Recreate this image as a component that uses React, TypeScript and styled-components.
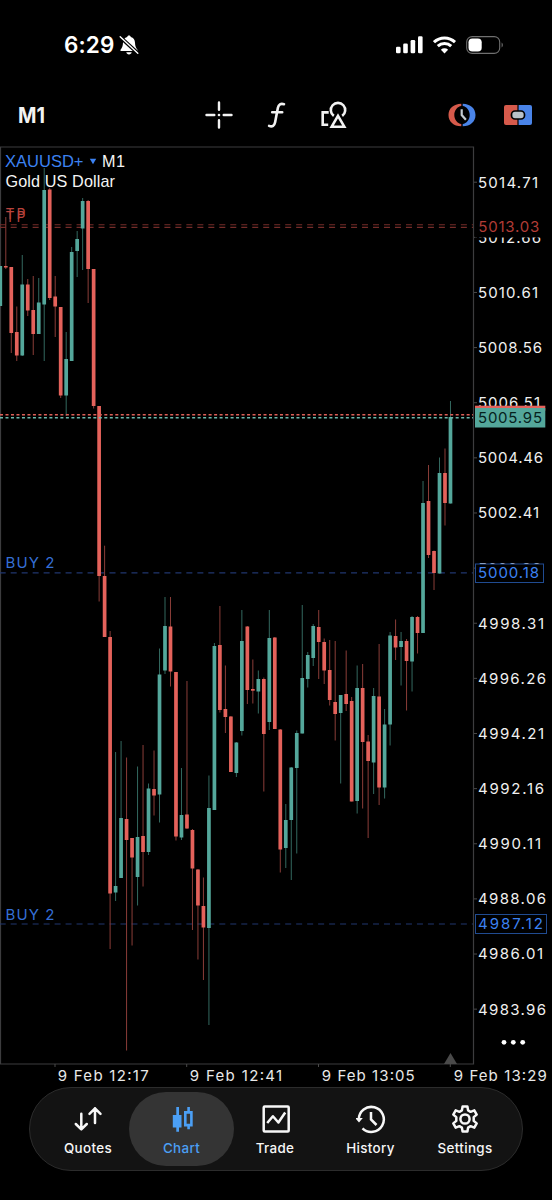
import React from 'react';
import styled, { createGlobalStyle } from 'styled-components';

const GlobalStyle = createGlobalStyle`
  * { box-sizing: border-box; }
  body { margin: 0; background: #000; }
`;

const Screen = styled.div`
  width: 552px;
  height: 1200px;
  display: flex;
  flex-direction: column;
  background: #000;
  color: #fff;
  font-family: Inter, 'Liberation Sans', sans-serif;
  overflow: hidden;
`;

const StatusBar = styled.header`
  height: 90px;
  padding: 0 48px 0 64px;
  display: flex;
  align-items: center;
  justify-content: space-between;
`;

const StatusGroup = styled.div<{ $gap: number }>`
  display: flex;
  align-items: center;
  gap: ${(p) => p.$gap}px;
`;

const Clock = styled.span`
  font-size: 22.5px;
  font-weight: 600;
  line-height: 26px;
  letter-spacing: 0.1px;
`;

const Toolbar = styled.div`
  height: 56px;
  padding: 0 20px 6px 18px;
  display: grid;
  grid-template-columns: 1fr auto 1fr;
  align-items: center;
`;

const ToolGroup = styled.div<{ $gap: number; $end?: boolean; $inset?: number }>`
  display: flex;
  align-items: center;
  gap: ${(p) => p.$gap}px;
  padding-left: ${(p) => p.$inset ?? 0}px;
  justify-content: ${(p) => (p.$end ? 'flex-end' : 'flex-start')};
`;

const IconButton = styled.button`
  display: flex;
  padding: 0;
  border: 0;
  background: none;
  color: #f2f2f2;
`;

const Timeframe = styled(IconButton)`
  font: 650 22px/26px Inter, sans-serif;
  transform: scaleX(0.9);
  transform-origin: left;
`;

const ChartArea = styled.main`
  height: 941px;
  display: flex;
`;

const TabBar = styled.nav`
  width: 494px;
  height: 84px;
  margin: 0 0 0 29px;
  padding: 4px 5px 4px 17px;
  display: flex;
  border: 1px solid #2c2c2c;
  border-radius: 42px;
  background: #131313;
`;

const Tab = styled.button<{ $active?: boolean; $width: number }>`
  width: ${(p) => p.$width}px;
  height: 74px;
  padding: 12px 0 0;
  display: flex;
  flex-direction: column;
  align-items: center;
  gap: 5px;
  border: 0;
  border-radius: 37px;
  background: ${(p) => (p.$active ? '#343434' : 'transparent')};
  color: ${(p) => (p.$active ? '#4b9ff5' : '#f7f7f7')};
  font: 500 13.4px/18px Inter, sans-serif;
  letter-spacing: 0.35px;
`;

/* direction, high, body top, body bottom, low */
type Candle = ['u' | 'd', number, number, number, number];

const candles: Candle[] = [
  ['u', 266, 266, 306, 306], ['d', 217, 266, 267.5, 269], ['d', 267, 267, 333, 353],
  ['d', 306.5, 332, 355.5, 361], ['u', 255, 284.5, 355.5, 356], ['d', 279, 284.5, 310.5, 316],
  ['d', 276, 310, 334, 355], ['u', 278, 302.5, 334, 334], ['u', 168, 190, 304.5, 361],
  ['d', 188, 189.5, 298, 300], ['d', 276, 296.5, 306.5, 337], ['d', 307, 307, 395.5, 398],
  ['u', 332, 359, 395.5, 416], ['u', 247, 252, 361, 361], ['u', 231, 239, 251, 277],
  ['u', 198, 201, 228.5, 270], ['d', 200, 201, 269, 303], ['d', 269, 269, 406, 408.5],
  ['d', 406, 406, 576, 601.5], ['d', 545.7, 576, 637, 637], ['d', 631, 637, 893.5, 949],
  ['u', 752, 886, 892.5, 901], ['u', 741, 818, 878, 878], ['d', 757.5, 819, 840, 1050.5],
  ['d', 838, 838, 857.5, 945.5], ['u', 766.5, 837, 877, 905.5], ['d', 745, 836, 852, 886.5],
  ['u', 783.5, 788.5, 852, 855], ['d', 750.5, 789, 795.5, 815.5], ['u', 648.5, 674.5, 794.5, 822.5],
  ['u', 597, 626, 670.5, 674], ['d', 597, 626.5, 671.5, 686.5], ['d', 672, 672, 836.5, 840.5],
  ['u', 768, 815, 837.5, 840], ['d', 681, 814.5, 828.5, 829], ['d', 829, 830, 868.5, 930],
  ['d', 869, 869.5, 905.5, 959.5], ['d', 877.5, 906, 927.5, 980], ['u', 775.5, 808, 928, 1025],
  ['u', 643, 646, 810, 810], ['d', 606, 645, 710, 712.5], ['d', 665.5, 709, 717, 733],
  ['d', 716, 716.5, 772, 772], ['u', 742, 742.5, 773, 777], ['u', 610, 641, 731, 735.5],
  ['d', 626, 626.5, 690, 704], ['d', 659.5, 689, 690.7, 703.5], ['u', 670.5, 679, 691.5, 713.5],
  ['d', 677.5, 679, 734, 791.5], ['u', 610, 638, 722, 730], ['d', 637, 637.5, 729, 729],
  ['d', 729, 729.5, 849.5, 872.5], ['u', 804, 820, 848, 868], ['u', 767, 767.5, 820, 880],
  ['u', 730.5, 733, 768, 853.5], ['u', 605, 678, 733.5, 733.5], ['u', 652, 655, 679, 687.5],
  ['u', 624, 626, 658, 666], ['d', 610, 627, 642, 679], ['d', 638.5, 642, 670.5, 684],
  ['d', 640, 670, 700, 705.5], ['d', 641, 702, 714, 740.5], ['u', 695, 695, 713, 783.5],
  ['d', 650.5, 694, 704, 711], ['d', 697, 701, 801.5, 801.5], ['u', 665.5, 688, 801, 813.5],
  ['d', 664, 688, 742, 808.5], ['d', 735, 741.5, 761, 838], ['u', 688, 696, 762.5, 794],
  ['d', 644, 696.5, 787.5, 805], ['u', 709, 724.5, 787.5, 798.5], ['u', 632, 635.5, 724.5, 745.5],
  ['d', 619.5, 636, 647.5, 660], ['u', 632, 641, 647, 685.5], ['d', 639, 641, 661, 710.5],
  ['u', 616, 617, 661.5, 691.5], ['d', 616, 617, 633, 653.5], ['u', 481, 503, 633, 633],
  ['d', 465, 501, 555, 558], ['d', 550.5, 551, 573, 590], ['u', 457.5, 473, 573.5, 573.5],
  ['d', 448.5, 473, 503, 525.5], ['u', 401, 417, 503.5, 503.5],
];

/* label, drawn width */
const prices: [string, number][] = [
  ['5014.71', 60], ['5012.66', 63], ['5010.61', 60], ['5008.56', 64], ['5006.51', 62],
  ['5004.46', 65], ['5002.41', 61], ['5000.36', 63], ['4998.31', 66], ['4996.26', 68],
  ['4994.21', 66], ['4992.16', 66], ['4990.11', 63], ['4988.06', 68], ['4986.01', 65],
  ['4983.96', 68],
];

const times: [string, number, number][] = [
  ['9 Feb 12:17', 58, 91], ['9 Feb 12:41', 190, 92.5], ['9 Feb 13:05', 322, 93], ['9 Feb 13:29', 454, 93],
];

const Label = styled.text<{ $size?: number }>`
  font-family: Inter, sans-serif;
  font-size: ${(p) => p.$size ?? 15}px;
`;

const Caption = styled.text`
  font-family: 'Liberation Sans', Arial, sans-serif;
  font-size: 16.2px;
`;

function PriceChart() {
  return (
    <svg width="552" height="941" viewBox="0 146 552 941">
      <path d="M0.5 1064V147H473.5V1064H0" fill="none" stroke="#3c3c3e" strokeWidth="1.2" />
      <Caption x="5" y="166.5" fill="#3c82f2" textLength="78.5" lengthAdjust="spacingAndGlyphs">XAUUSD+</Caption>
      <path d="M89.8 158.8h6.4l-3.2 5.4z" fill="#3c82f2" />
      <Caption x="102" y="166.5" fill="#f4f4f4" textLength="23">M1</Caption>
      <Caption x="5.5" y="186.7" fill="#f4f4f4" textLength="109.5">Gold US Dollar</Caption>

      <g stroke="#742c29" strokeWidth="1.1" strokeDasharray="6 4.98">
        <path d="M-0.3 224.8H473M-0.3 227.4H473" />
      </g>
      <g stroke="#20366f" strokeWidth="1.2" strokeDasharray="6 4.98">
        <path d="M-0.3 572.8H473M-0.3 924H473" />
      </g>

      {candles.map(([dir, high, top, bottom, low], i) => {
        const x = 0.3 + i * 5.49;
        const up = dir === 'u';
        return (
          <g key={i}>
            <rect x={x - 0.5} y={high} width="1" height={low - high} fill={up ? '#33685f' : '#8a3d38'} />
            <rect x={x - 1.85} y={top} width="3.7" height={bottom - top} fill={up ? '#54a79b' : '#e4625b'} />
          </g>
        );
      })}

      <path d="M0 414.8H473" stroke="#dc5f57" strokeWidth="1.6" strokeDasharray="3 2.49" />
      <path d="M0 417.7H473" stroke="#6cb9ad" strokeWidth="1.6" strokeDasharray="3 2.49" />

      <g fill="#b8433c">
        <Label x="5.5" y="219" textLength="20" $size={14}>TP</Label>
        <Label x="5.5" y="222" textLength="20" $size={14}>TP</Label>
      </g>
      <Label x="5.5" y="568.4" fill="#356fd6" textLength="49">BUY 2</Label>
      <Label x="5.5" y="919.8" fill="#356fd6" textLength="49">BUY 2</Label>

      {prices.map(([text, width], i) => {
        const y = 182.2 + i * 55.13;
        return (
          <g key={text}>
            <path d={`M474 ${y}h3`} stroke="#4a4a4a" />
            <Label x="478" y={y + 5.4} fill="#f0f0f0" textLength={width}>{text}</Label>
          </g>
        );
      })}

      <rect x="475" y="217" width="72" height="20.5" fill="#000" />
      <Label x="478.3" y="232.4" fill="#b13c36" textLength="61">5013.03</Label>
      <rect x="475" y="405.7" width="70.3" height="5" fill="#e4625b" />
      <rect x="475" y="408" width="70.3" height="19.5" fill="#54a79b" />
      <Label x="478" y="423.2" fill="#06211d" textLength="64">5005.95</Label>
      <rect x="475.5" y="564" width="68" height="18.500" fill="#000" stroke="#204b91" />
      <Label x="478" y="578.3" fill="#3c82f2" textLength="61">5000.18</Label>
      <rect x="475.5" y="914.5" width="71" height="19" fill="#000" stroke="#204b91" />
      <Label x="478" y="929.4" fill="#3c82f2" textLength="65">4987.12</Label>

      <path d="M450.5 1053l6.500 11h-13z" fill="#4a4a4a" />
      <g stroke="#4a4a4a">
        {[55, 186.7, 318.5, 450.3].map((x) => <path key={x} d={`M${x} 1064v3`} />)}
      </g>
      <g fill="#fff">
        <circle cx="504" cy="1042.3" r="2.4" /><circle cx="513.3" cy="1042.3" r="2.4" /><circle cx="522.7" cy="1042.3" r="2.4" />
      </g>
      {times.map(([text, x, width]) => (
        <Label key={text} x={x - 0.3} y="1080.6" fill="#e8e8e8" textLength={width}>{text}</Label>
      ))}
    </svg>
  );
}

const BellOff = () => (
  <svg width="20" height="20" viewBox="0 0 20 20">
    <path d="M10 .6c-1 0-1.7.7-1.8 1.5C5.500 2.900 4.100 5 4 7.800c-.1 3.600-1 5-2.300 6.600-.6.8-.2 1.700.8 1.700h15c1 0 1.400-.9.8-1.700C17 12.800 16.100 11.400 16 7.800c-.1-2.800-1.500-4.900-4.200-5.700C11.700 1.300 11 .6 10 .6z" fill="#fff" />
    <path d="M7.300 17.300h5.400c-.3 1.300-1.300 2.200-2.700 2.200s-2.400-.9-2.700-2.200z" fill="#fff" />
    <path d="M0.700 1.700L19 18.300" stroke="#000" strokeWidth="3.600" />
    <path d="M1.200 1.800L18.800 18.200" stroke="#fff" strokeWidth="1.400" strokeLinecap="round" />
  </svg>
);

const Signal = () => (
  <svg width="28" height="18" viewBox="0 0 28 18" fill="#fff">
    <rect x="0" y="10.700" width="4.600" height="6.600" rx="1.300" />
    <rect x="7.200" y="7.500" width="4.600" height="9.800" rx="1.300" />
    <rect x="14.600" y="4" width="4.600" height="13.300" rx="1.300" />
    <rect x="22" y="0.300" width="4.600" height="17" rx="1.300" />
  </svg>
);

const Wifi = () => (
  <svg width="24" height="18" viewBox="0 0 24 18" fill="none" stroke="#fff" strokeWidth="3">
    <path d="M1 6.200a15.200 15.200 0 0 1 21 0" />
    <path d="M4.800 10.200a9.700 9.700 0 0 1 13.400 0" />
    <path d="M11.500 17.400l-3.600-3.700a5.200 5.200 0 0 1 7.200 0z" fill="#fff" stroke="none" />
  </svg>
);

const Battery = () => (
  <svg width="38" height="18" viewBox="0 0 38 18">
    <rect x="0.700" y="0.600" width="33" height="16.800" rx="5.500" fill="none" stroke="#707070" strokeWidth="1.100" />
    <rect x="2.500" y="2.400" width="13.200" height="13.200" rx="3.800" fill="#fff" />
    <path d="M35.600 6.500c1.600.7 1.600 4.300 0 5z" fill="#707070" />
  </svg>
);

const Crosshair = () => (
  <svg width="28" height="28" viewBox="0 0 28 28" fill="none" stroke="currentColor" strokeWidth="2.400" strokeLinecap="round">
    <path d="M14 1.500v7.300M14 19.200v7.300M1.500 14h7.800M18.700 14h7.800" />
    <circle cx="14" cy="14" r="1.300" fill="currentColor" stroke="none" />
  </svg>
);

const FunctionIcon = () => (
  <svg width="20" height="28" viewBox="0 0 20 28" fill="none" stroke="currentColor" strokeWidth="2.600" strokeLinecap="round">
    <path d="M17 3.200c-3.300-1-5.400.2-6.100 3.600L8.100 21.200c-.7 3.500-2.700 4.900-6 3.700M5.200 11.300h10" />
  </svg>
);

const Shapes = () => (
  <svg width="28" height="28" viewBox="0 0 28 28" fill="none" stroke="currentColor" strokeWidth="2.600">
    <path d="M12.800 14.900a7.200 7.200 0 1 1 8.400 0" />
    <path d="M17 14.900l6.300 10.800H10.700z" />
    <path d="M7.700 11.400H1.700v12.300h5.500" />
  </svg>
);

const MarketClock = () => (
  <svg width="28" height="24" viewBox="0 0 28 24">
    <path d="M13.300.7C5.500.9.500 5.300.500 12s5 11.100 12.800 11.300V21C9.500 20.400 6.300 16.800 6.300 12s3.200-8.400 7-9z" fill="#d65a4b" />
    <path d="M14.700.7c7.800.2 12.800 4.600 12.800 11.300s-5 11.100-12.800 11.300V21c3.800-.6 7-4.200 7-9s-3.200-8.400-7-9z" fill="#4a84e8" />
    <path d="M13.700 6.300V12l4.200 4.800" fill="none" stroke="#c3cbd1" strokeWidth="2.200" />
  </svg>
);

const OneClick = () => (
  <svg width="28" height="20" viewBox="0 0 28 20">
    <path d="M2 0h11.400v20H2a2 2 0 0 1-2-2V2a2 2 0 0 1 2-2z" fill="#d65a4b" />
    <path d="M14.600 0H26a2 2 0 0 1 2 2v16a2 2 0 0 1-2 2H14.600z" fill="#4a84e8" />
    <rect x="7.500" y="6" width="13" height="8" rx="3.500" fill="#b9c2c9" stroke="#000" strokeWidth="1.700" />
  </svg>
);

const QuotesIcon = () => (
  <svg width="30" height="30" viewBox="0 0 30 30" fill="none" stroke="currentColor" strokeWidth="2.500" strokeLinecap="round" strokeLinejoin="round">
    <path d="M8.300 9.800v15.400M2.800 20l5.500 5.400 5.500-5.400M22 19V4.200M16.500 9.800L22 4.300l5.500 5.500" />
  </svg>
);

const CandlesIcon = () => (
  <svg width="30" height="30" viewBox="0 0 30 30" fill="currentColor">
    <path d="M9.300 3H12v8h2.500v12.500H12v4.200H9.300v-4.200H5.800V11h3.500z" />
    <path fillRule="evenodd" d="M20.300 3h2.600v4h2.800v15.500h-2.800v2.800h-2.600v-2.800H17V7h3.300zM19.600 9.800v10h3.500v-10z" />
  </svg>
);

const TradeIcon = () => (
  <svg width="30" height="30" viewBox="0 0 30 30" fill="none" stroke="currentColor" strokeWidth="2.500" strokeLinejoin="round">
    <rect x="3.700" y="2.500" width="25" height="25" rx="1" />
    <path d="M7.200 19l5.700-6.800 5.500 6.300 6.800-10" />
  </svg>
);

const HistoryIcon = () => (
  <svg width="30" height="30" viewBox="0 0 30 30" fill="none" stroke="currentColor" strokeWidth="2.500">
    <path d="M2.800 15.500A12.500 12.500 0 1 1 6.500 24.300" />
    <path d="M-0.800 14h7.600l-3.800 4.400z" fill="currentColor" stroke="none" />
    <path d="M15 8v7.500l5.500 5.500" />
  </svg>
);

const SettingsIcon = () => (
  <svg width="30" height="30" viewBox="0 0 30 30" fill="none" stroke="currentColor" strokeWidth="2.500" strokeLinejoin="round">
    <path d="M12.600 2.500h4.800l.7 3.900 2.500 1.400 3.700-1.400 2.400 4.200-3 2.500v3.800l3 2.500-2.400 4.200-3.700-1.400-2.500 1.400-.7 3.900h-4.800l-.7-3.900-2.500-1.400-3.700 1.400-2.400-4.200 3-2.500v-3.800l-3-2.500 2.400-4.200 3.700 1.400 2.500-1.400z" />
    <circle cx="15" cy="15" r="4.600" />
  </svg>
);

const tabs = [
  { label: 'Quotes', icon: <QuotesIcon />, width: 82 },
  { label: 'Chart', icon: <CandlesIcon />, width: 105, active: true },
  { label: 'Trade', icon: <TradeIcon />, width: 82 },
  { label: 'History', icon: <HistoryIcon />, width: 109 },
  { label: 'Settings', icon: <SettingsIcon />, width: 80 },
];

export default function App() {
  return (
    <Screen>
      <GlobalStyle />
      <StatusBar>
        <StatusGroup $gap={5}>
          <Clock>6:29</Clock>
          <BellOff />
        </StatusGroup>
        <StatusGroup $gap={9}>
          <Signal />
          <Wifi />
          <Battery />
        </StatusGroup>
      </StatusBar>
      <Toolbar>
        <ToolGroup $gap={0}><Timeframe>M1</Timeframe></ToolGroup>
        <ToolGroup $gap={34} $inset={3}>
          <IconButton><Crosshair /></IconButton>
          <IconButton><FunctionIcon /></IconButton>
          <IconButton><Shapes /></IconButton>
        </ToolGroup>
        <ToolGroup $gap={28} $end>
          <IconButton><MarketClock /></IconButton>
          <IconButton><OneClick /></IconButton>
        </ToolGroup>
      </Toolbar>
      <ChartArea><PriceChart /></ChartArea>
      <TabBar>
        {tabs.map((t) => (
          <Tab key={t.label} $active={t.active} $width={t.width}>
            {t.icon}
            {t.label}
          </Tab>
        ))}
      </TabBar>
    </Screen>
  );
}
